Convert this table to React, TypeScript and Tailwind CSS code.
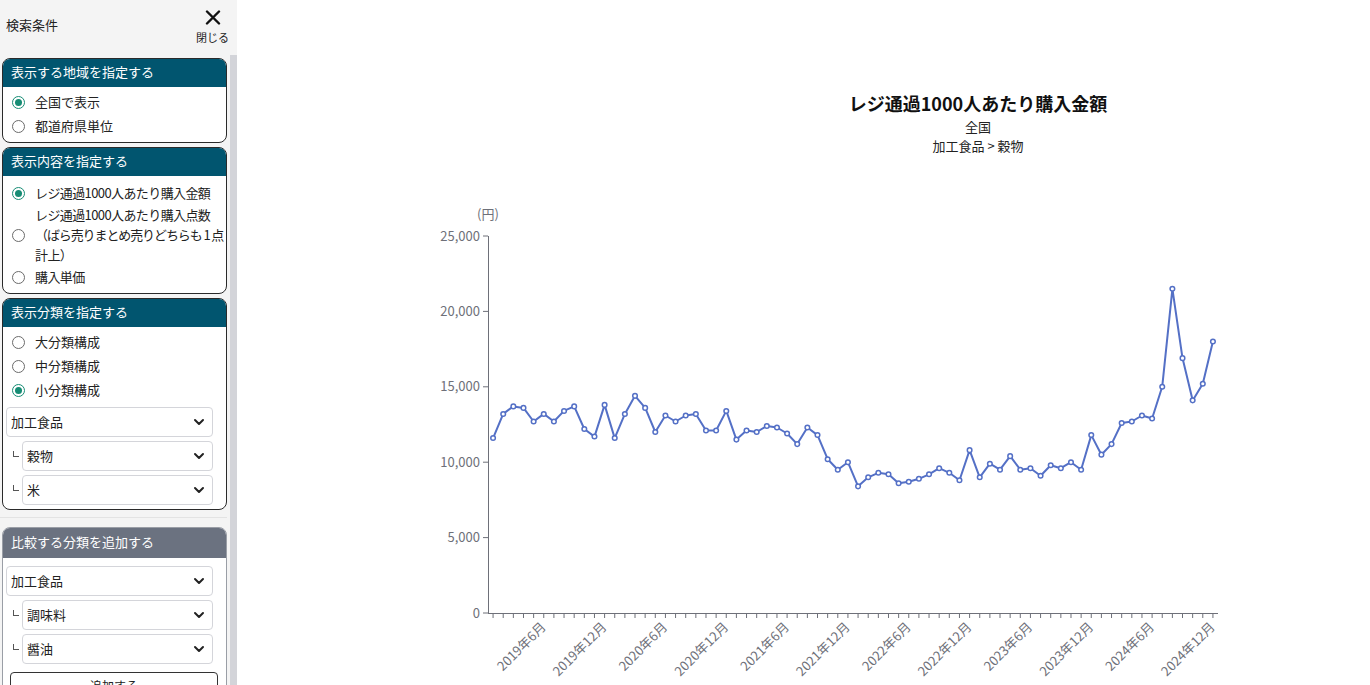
import { ChevronDown } from "lucide-react";

const FONT = { fontFamily: '"Noto Sans CJK JP", "Noto Sans", sans-serif' };

const values = [
  11600, 13200, 13700, 13600, 12700, 13200, 12700, 13400, 13700, 12200, 11700, 13800,
  11600, 13200, 14400, 13600, 12000, 13100, 12700, 13100, 13200, 12100, 12100, 13400,
  11500, 12100, 12000, 12400, 12300, 11900, 11200, 12300, 11800, 10200, 9500, 10000,
  8400, 9000, 9300, 9200, 8600, 8700, 8900, 9200, 9600, 9300, 8800, 10800,
  9000, 9900, 9500, 10400, 9500, 9600, 9100, 9800, 9600, 10000, 9500, 11800,
  10500, 11200, 12600, 12700, 13100, 12900, 15000, 21500, 16900, 14100, 15200, 18000,
];

function Radio({ checked }: { checked?: boolean }) {
  return checked ? (
    <span className="w-[13px] h-[13px] rounded-full border-[1.5px] border-[#168c74] flex items-center justify-center shrink-0">
      <span className="w-[7px] h-[7px] rounded-full bg-[#168c74]" />
    </span>
  ) : (
    <span className="w-[13px] h-[13px] rounded-full border border-[#6b6b6b] bg-white shrink-0" />
  );
}

function Option({ label, checked, multi }: { label: React.ReactNode; checked?: boolean; multi?: boolean }) {
  return (
    <label className={`flex items-center gap-[10px] pl-[9px] leading-[20px] whitespace-nowrap ${multi ? "" : "py-[2px]"}`}>
      <Radio checked={checked} />
      <span>{label}</span>
    </label>
  );
}

function Card({ title, children, muted }: { title: string; children: React.ReactNode; muted?: boolean }) {
  return (
    <div
      className={`w-[225px] ml-[2px] shrink-0 rounded-[8px] border bg-white overflow-hidden ${
        muted ? "border-[#9a9ea6]" : "border-[#2a2a2a]"
      }`}
    >
      <div
        className={`px-[8px] text-white leading-[20px] ${
          muted ? "bg-[#6b7280] h-[30px] pt-[4px]" : "bg-[#01556f] h-[28px] pt-[3px]"
        }`}
      >
        {title}
      </div>
      {children}
    </div>
  );
}

function Select({ value, sub }: { value: string; sub?: boolean }) {
  const box = (
    <div
      className={`h-[30px] shrink-0 rounded-[4px] border border-[#d4d5da] bg-white flex items-center justify-between pl-[4px] pr-[5px] ${
        sub ? "w-[191px]" : "w-[207px]"
      }`}
    >
      <span>{value}</span>
      <ChevronDown size={16} strokeWidth={3} className="text-[#222]" />
    </div>
  );
  if (!sub) return <div className="ml-[3px]">{box}</div>;
  return (
    <div className="flex items-start ml-[3px]">
      <span className="w-[16px] shrink-0 pl-[7px] pt-[10px]">
        <span className="block w-[6px] h-[6px] border-l border-b border-[#555]" />
      </span>
      {box}
    </div>
  );
}

function Sidebar() {
  return (
    <aside className="w-[237px] h-full bg-[#f4f4f4] flex flex-col shrink-0 text-[13px] text-[#222]">
      <div className="h-[55px] flex items-start justify-between pl-[6px] pr-[8px] shrink-0">
        <span className="mt-[15px]">検索条件</span>
        <button className="flex flex-col items-center mt-[10px]">
          <svg width="16" height="15" viewBox="0 0 16 15">
            <path d="M2 1.5 L14 13.5 M14 1.5 L2 13.5" stroke="#111" strokeWidth="2.4" strokeLinecap="round" />
          </svg>
          <span className="text-[11px] leading-[14px] mt-[5px]">閉じる</span>
        </button>
      </div>
      <div className="flex flex-1 min-h-0">
        <div className="w-[230px] flex flex-col overflow-hidden pt-[3px]">
          <Card title="表示する地域を指定する">
            <div className="pt-[3px] pb-[4px]">
              <Option label="全国で表示" checked />
              <Option label="都道府県単位" />
            </div>
          </Card>
          <div className="h-[4px] shrink-0" />
          <Card title="表示内容を指定する">
            <div className="pt-[5px] pb-[4px] tracking-[-0.6px]">
              <Option label="レジ通過1000人あたり購入金額" checked />
              <Option
                multi
                label={
                  <>
                    レジ通過1000人あたり購入点数
                    <br />
                    <span className="tracking-[-1.1px]">（ばら売りまとめ売りどちらも 1 点</span>
                    <br />
                    計上）
                  </>
                }
              />
              <Option label="購入単価" />
            </div>
          </Card>
          <div className="h-[4px] shrink-0" />
          <Card title="表示分類を指定する">
            <div className="pt-[3px] pb-[4px] flex flex-col">
              <Option label="大分類構成" />
              <Option label="中分類構成" />
              <Option label="小分類構成" checked />
              <div className="flex flex-col gap-[4px] mt-[5px]">
                <Select value="加工食品" />
                <Select value="穀物" sub />
                <Select value="米" sub />
              </div>
            </div>
          </Card>
          <div className="h-[8px] shrink-0 border-b border-[#e3e3e3] w-[227px]" />
          <div className="h-[9px] shrink-0" />
          <Card title="比較する分類を追加する" muted>
            <div className="pt-[8px] flex flex-col gap-[4px]">
              <Select value="加工食品" />
              <Select value="調味料" sub />
              <Select value="醤油" sub />
              <button className="mt-[4px] ml-[7px] w-[208px] h-[28px] shrink-0 rounded-[4px] border border-[#333] bg-white text-[12px] flex items-center justify-center">
                追加する
              </button>
            </div>
          </Card>
        </div>
        <div className="w-[7px] bg-[#d3d4d9]" />
      </div>
    </aside>
  );
}

function Chart() {
  const X0 = 251;
  const W = 730;
  const Y0 = 613;
  const H = 377;
  const MAX = 25000;
  const step = W / 72;
  const px = (i: number) => X0 + step * (i + 0.5);
  const py = (v: number) => Y0 - (v / MAX) * H;
  const axis = "#6e7079";
  const line = values.map((v, i) => `${i ? "L" : "M"}${px(i).toFixed(1)} ${py(v).toFixed(1)}`).join(" ");
  const yTicks = [0, 5000, 10000, 15000, 20000, 25000];

  return (
    <svg width="1133" height="685" viewBox="0 0 1133 685" style={FONT}>
      <text x="741" y="111" textAnchor="middle" fontSize="18" fontWeight="700" fill="#111">
        レジ通過1000人あたり購入金額
      </text>
      <text x="741" y="132" textAnchor="middle" fontSize="13" fill="#222">全国</text>
      <text x="741" y="151" textAnchor="middle" fontSize="13" fill="#222">加工食品 &gt; 穀物</text>

      <text x="251" y="219" textAnchor="middle" fontSize="13" fill={axis}>(円)</text>
      {yTicks.map((t) => (
        <g key={t}>
          <line x1={X0 - 5} x2={X0} y1={py(t)} y2={py(t)} stroke={axis} />
          <text x={X0 - 8} y={py(t) + 4.5} textAnchor="end" fontSize="13" fill={axis}>
            {t.toLocaleString("en-US")}
          </text>
        </g>
      ))}
      <line x1={X0 + 0.5} x2={X0 + 0.5} y1={py(MAX)} y2={Y0} stroke={axis} />
      <line x1={X0} x2={X0 + W} y1={Y0 + 0.5} y2={Y0 + 0.5} stroke={axis} />
      {values.map((_, i) => (
        <line key={i} x1={px(i)} x2={px(i)} y1={Y0} y2={Y0 + 5} stroke={axis} />
      ))}
      {values.map((_, i) =>
        i % 6 === 5 ? (
          <text
            key={i}
            transform={`translate(${(px(i) - 1).toFixed(1)} ${Y0 + 11}) rotate(-45)`}
            textAnchor="end"
            dominantBaseline="central"
            fontSize="13"
            fill={axis}
          >
            {`${2019 + Math.floor(i / 12)}年${(i % 12) + 1}月`}
          </text>
        ) : null
      )}
      <path d={line} fill="none" stroke="#5470c6" strokeWidth="2" strokeLinejoin="round" />
      {values.map((v, i) => (
        <circle key={i} cx={px(i)} cy={py(v)} r="2.3" fill="#fff" stroke="#5470c6" strokeWidth="1.5" />
      ))}
    </svg>
  );
}

export default function App() {
  return (
    <div className="flex h-screen w-full overflow-hidden bg-white" style={FONT}>
      <Sidebar />
      <main className="flex-1 min-w-0">
        <Chart />
      </main>
    </div>
  );
}
